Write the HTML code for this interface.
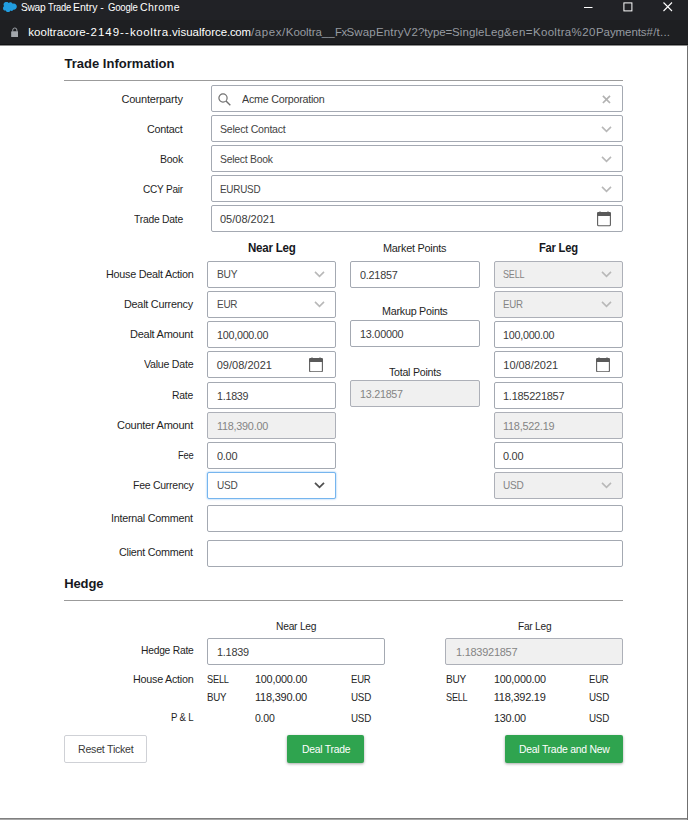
<!DOCTYPE html>
<html lang="en"><head><meta charset="utf-8"><title>Swap Trade Entry</title>
<style>
*{box-sizing:border-box}
html,body{margin:0;padding:0}
body{width:688px;height:820px;overflow:hidden;background:#fff;font-family:"Liberation Sans", Arial, sans-serif;position:relative}
span,label,h2{position:absolute;transform-origin:0 0;white-space:pre;margin:0;font-weight:400;display:block}
.titlebar{position:absolute;left:0;top:0;width:688px;height:20px;background:#212226}
.urlbar{position:absolute;left:0;top:20px;width:688px;height:25px;background:#1e1f22;border-bottom:1px solid #111214}
.cloud{position:absolute;left:3px;top:2px}
.wc{position:absolute}
.lock{position:absolute;left:10.700px;top:6.900px}
.page{position:absolute;left:0;top:45px;width:687px;height:773px;background:#fff}
.page:before{content:"";position:absolute;left:0;top:0;width:688px;height:1px;background:#8c8c8c}
.edge-r{position:absolute;left:687px;top:45px;width:1px;height:775px;background:#707070}
.edge-b{position:absolute;left:0;top:818px;width:688px;height:2px;background:linear-gradient(#808080 0 50%,#a8a8a8 50% 100%)}
.hr{position:absolute;left:64px;width:559px;height:1px;background:#9b9b9b}
.inp{position:absolute;border:1px solid #a4a9b2;border-radius:2px;background:#fff}
.inp.dis{background:#f0f0f0;border-color:#adb0b8}
.inp.foc{border-color:#76b5ee;box-shadow:0 0 2px rgba(74,159,240,.75)}
.chev{position:absolute;right:10px;top:10px}
.cal{position:absolute;right:11.500px;top:5px}
.leg .chev{top:9px}
.leg .cal{top:4.700px;right:12px}
.leg .chev{right:9.700px}
.xic{position:absolute;right:11.500px;top:8.500px}
.srch{position:absolute;left:6px;top:7px}
.btn{position:absolute;border:1px solid #cfd1d6;border-radius:2px;background:#fff;padding:0;margin:0;font-family:inherit}
.btn.g{border:0;background:#2fa44f;box-shadow:0 1px 3px rgba(0,0,0,.35)}
</style></head>
<body>
<div class="titlebar">
<svg class="cloud" viewBox="0 0 28 20" width="13.600" height="10" preserveAspectRatio="none"><path d="M11.6 2.2a5 5 0 0 1 3.7-1.6c1.9 0 3.600 1.100 4.500 2.700a6 6 0 0 1 2.500-.5c3.400 0 6.200 2.800 6.200 6.300s-2.800 6.300-6.200 6.300c-.4 0-.8 0-1.200-.1a4.500 4.500 0 0 1-5.900 1.900 5.200 5.200 0 0 1-9.600-.2 4.700 4.700 0 0 1-1 .1C2 17.100 0 15 0 12.400c0-1.700.9-3.200 2.300-4a5.400 5.400 0 0 1 9.300-6.200z" fill="#219de0"/></svg>
<div class="ttl"><span style="top:0.30px;left:20.70px;font-size:10.5px;line-height:14px;letter-spacing:-0.250px;color:#fff;transform:scaleX(0.9664);">Swap </span><span style="top:0.30px;left:47.70px;font-size:10.5px;line-height:14px;letter-spacing:-0.250px;color:#fff;transform:scaleX(0.8887);">Trade </span><span style="top:0.30px;left:73.00px;font-size:10.5px;line-height:14px;letter-spacing:-0.023px;color:#fff;">Entry </span><span style="top:0.30px;left:100.30px;font-size:10.5px;line-height:14px;letter-spacing:0.639px;color:#fff;">- </span><span style="top:0.30px;left:108.00px;font-size:10.5px;line-height:14px;letter-spacing:-0.250px;color:#fff;transform:scaleX(0.9135);">Google </span><span style="top:0.30px;left:140.00px;font-size:10.5px;line-height:14px;letter-spacing:0.440px;color:#fff;">Chrome</span></div>
<svg class="wc" style="left:584px;top:2px" width="10" height="10" viewBox="0 0 10 10"><path d="M0 5.500H8.500" stroke="#fff" stroke-width="1" fill="none"/></svg>
<svg class="wc" style="left:623px;top:2px" width="10" height="10" viewBox="0 0 10 10"><rect x="0.900" y="0.900" width="8" height="8" stroke="#fff" stroke-width="1" fill="none"/></svg>
<svg class="wc" style="left:663px;top:2px" width="10" height="10" viewBox="0 0 10 10"><path d="M0.500 0.500L9 9M9 0.500L0.500 9" stroke="#fff" stroke-width="1.100" fill="none"/></svg>
</div>
<div class="urlbar">
<svg class="lock" viewBox="0 0 16 22" width="7.600" height="10.400"><path d="M3.600 9.500V6.500a4.400 4.400 0 0 1 8.800 0V9.500" stroke="#a3a7ac" stroke-width="2" fill="none"/><rect x="0.300" y="9" width="15.400" height="12.600" rx="1.500" fill="#a3a7ac"/></svg>
<div class="url"><span style="top:4.30px;left:28.30px;font-size:11.5px;line-height:16px;letter-spacing:0.055px;color:#fff;">kooltracore</span><span style="top:4.30px;left:85.80px;font-size:11.5px;line-height:16px;letter-spacing:0.956px;color:#fff;">-2149</span><span style="top:4.30px;left:120.00px;font-size:11.5px;line-height:16px;letter-spacing:1.164px;color:#fff;">--</span><span style="top:4.30px;left:130.00px;font-size:11.5px;line-height:16px;letter-spacing:0.610px;color:#fff;">kooltra</span><span style="top:4.30px;left:168.80px;font-size:11.5px;line-height:16px;letter-spacing:0.027px;color:#fff;">.visualforce</span><span style="top:4.30px;left:227.30px;font-size:11.5px;line-height:16px;letter-spacing:-0.250px;color:#fff;transform:scaleX(0.9865);">.com</span><span style="top:4.30px;left:250.90px;font-size:11.5px;line-height:16px;letter-spacing:0.595px;color:#969ba1;">/apex/</span><span style="top:4.30px;left:285.80px;font-size:11.5px;line-height:16px;letter-spacing:-0.059px;color:#969ba1;">Kooltra__</span><span style="top:4.30px;left:334.50px;font-size:11.5px;line-height:16px;letter-spacing:-0.250px;color:#969ba1;transform:scaleX(0.9771);">Fx</span><span style="top:4.30px;left:346.50px;font-size:11.5px;line-height:16px;letter-spacing:0.165px;color:#969ba1;">SwapEntryV2</span><span style="top:4.30px;left:418.00px;font-size:11.5px;line-height:16px;letter-spacing:-0.143px;color:#969ba1;">?type=</span><span style="top:4.30px;left:452.00px;font-size:11.5px;line-height:16px;letter-spacing:0.094px;color:#969ba1;">SingleLeg</span><span style="top:4.30px;left:504.00px;font-size:11.5px;line-height:16px;letter-spacing:0.453px;color:#969ba1;">&amp;en=</span><span style="top:4.30px;left:533.00px;font-size:11.5px;line-height:16px;letter-spacing:0.295px;color:#969ba1;">Kooltra</span><span style="top:4.30px;left:571.50px;font-size:11.5px;line-height:16px;letter-spacing:0.490px;color:#969ba1;">%20</span><span style="top:4.30px;left:596.00px;font-size:11.5px;line-height:16px;letter-spacing:-0.080px;color:#969ba1;">Payments</span><span style="top:4.30px;left:646.50px;font-size:11.5px;line-height:16px;letter-spacing:0.237px;color:#969ba1;">#/t...</span></div>
</div>
<div class="page">
<h2 style="top:9.80px;left:64.50px;font-size:13px;line-height:18px;letter-spacing:0.012px;font-weight:700;color:#16181d;">Trade Information</h2>
<div class="hr" style="top:35px"></div>
<label style="top:46.50px;left:121.40px;font-size:11px;line-height:14px;letter-spacing:-0.191px;color:#1f1f1f;">Counterparty</label>
<div class="inp" style="left:211px;top:40px;width:412px;height:27px"><svg class="srch" width="13" height="13" viewBox="0 0 13 13"><circle cx="5" cy="5" r="4.100" stroke="#707070" stroke-width="1.200" fill="none"/><path d="M8 8L12.300 12.300" stroke="#707070" stroke-width="1.400"/></svg><span style="top:5.80px;left:29.80px;font-size:11px;line-height:14px;letter-spacing:-0.250px;color:#3a3a3a;transform:scaleX(0.9745);">Acme Corporation</span><svg class="xic" width="9" height="9" viewBox="0 0 9 9"><path d="M0.900 0.900L8 8M8 0.900L0.900 8" stroke="#b2b2b2" stroke-width="1.700" fill="none"/></svg></div>
<label style="top:76.50px;left:147.20px;font-size:11px;line-height:14px;letter-spacing:-0.250px;color:#1f1f1f;transform:scaleX(0.9814);">Contact</label>
<div class="inp" style="left:211px;top:70px;width:412px;height:27px"><span style="top:5.80px;left:8.00px;font-size:11px;line-height:14px;letter-spacing:-0.250px;color:#444;transform:scaleX(0.9626);">Select Contact</span><svg class="chev" width="11" height="7" viewBox="0 0 11 7"><path d="M1 0.900L5.500 5.300L10 0.900" stroke="#b8b8b8" stroke-width="1.600" fill="none"/></svg></div>
<label style="top:106.50px;left:159.70px;font-size:11px;line-height:14px;letter-spacing:-0.250px;color:#1f1f1f;transform:scaleX(0.9552);">Book</label>
<div class="inp" style="left:211px;top:100px;width:412px;height:27px"><span style="top:5.80px;left:8.00px;font-size:11px;line-height:14px;letter-spacing:-0.250px;color:#444;transform:scaleX(0.9436);">Select Book</span><svg class="chev" width="11" height="7" viewBox="0 0 11 7"><path d="M1 0.900L5.500 5.300L10 0.900" stroke="#b8b8b8" stroke-width="1.600" fill="none"/></svg></div>
<label style="top:136.50px;left:142.70px;font-size:11px;line-height:14px;letter-spacing:-0.250px;color:#1f1f1f;transform:scaleX(0.9162);">CCY Pair</label>
<div class="inp" style="left:211px;top:130px;width:412px;height:27px"><span style="top:5.80px;left:8.00px;font-size:11px;line-height:14px;letter-spacing:-0.250px;color:#444;transform:scaleX(0.8965);">EURUSD</span><svg class="chev" width="11" height="7" viewBox="0 0 11 7"><path d="M1 0.900L5.500 5.300L10 0.900" stroke="#b8b8b8" stroke-width="1.600" fill="none"/></svg></div>
<label style="top:166.50px;left:133.70px;font-size:11px;line-height:14px;letter-spacing:-0.250px;color:#1f1f1f;transform:scaleX(0.9400);">Trade Date</label>
<div class="inp" style="left:211px;top:160px;width:412px;height:27px"><span style="top:5.80px;left:8.00px;font-size:11px;line-height:14px;letter-spacing:-0.006px;color:#3a3a3a;">05/08/2021</span><svg class="cal" width="14" height="15.500" viewBox="0 0 14 16" preserveAspectRatio="none"><path d="M3 0.200v2M11 0.200v2" stroke="#777" stroke-width="1.100"/><rect x="0.600" y="1.600" width="12.800" height="13.600" rx="1" fill="#fff" stroke="#5e5e5e" stroke-width="1.100"/><path d="M0.100 2.600a1.500 1.500 0 0 1 1.500-1.500h10.800a1.500 1.500 0 0 1 1.500 1.500v2.600H0.100z" fill="#5a5a5a"/></svg></div>
<span style="top:195.50px;left:248.00px;font-size:12px;line-height:15px;letter-spacing:-0.250px;font-weight:700;color:#16181d;transform:scaleX(0.9623);">Near Leg</span>
<span style="top:195.50px;left:538.80px;font-size:12px;line-height:15px;letter-spacing:-0.250px;font-weight:700;color:#16181d;transform:scaleX(0.9328);">Far Leg</span>
<label style="top:196.00px;left:383.30px;font-size:11px;line-height:14px;letter-spacing:-0.250px;color:#1f1f1f;transform:scaleX(0.9891);">Market Points</label>
<label style="top:259.00px;left:382.00px;font-size:11px;line-height:14px;letter-spacing:-0.250px;color:#1f1f1f;transform:scaleX(0.9767);">Markup Points</label>
<label style="top:319.50px;left:389.00px;font-size:11px;line-height:14px;letter-spacing:-0.250px;color:#1f1f1f;transform:scaleX(0.9652);">Total Points</label>
<label style="top:221.50px;left:105.50px;font-size:11px;line-height:14px;letter-spacing:-0.250px;color:#1f1f1f;transform:scaleX(0.9825);">House Dealt Action</label>
<label style="top:251.50px;left:124.20px;font-size:11px;line-height:14px;letter-spacing:-0.250px;color:#1f1f1f;transform:scaleX(0.9848);">Dealt Currency</label>
<label style="top:281.50px;left:130.00px;font-size:11px;line-height:14px;letter-spacing:-0.250px;color:#1f1f1f;transform:scaleX(0.9993);">Dealt Amount</label>
<label style="top:312.00px;left:143.70px;font-size:11px;line-height:14px;letter-spacing:-0.250px;color:#1f1f1f;transform:scaleX(0.9646);">Value Date</label>
<label style="top:342.50px;left:172.00px;font-size:11px;line-height:14px;letter-spacing:-0.250px;color:#1f1f1f;transform:scaleX(0.9438);">Rate</label>
<label style="top:372.50px;left:117.00px;font-size:11px;line-height:14px;letter-spacing:-0.250px;color:#1f1f1f;">Counter Amount</label>
<label style="top:402.50px;left:177.50px;font-size:11px;line-height:14px;letter-spacing:-0.250px;color:#1f1f1f;transform:scaleX(0.8508);">Fee</label>
<label style="top:432.50px;left:132.50px;font-size:11px;line-height:14px;letter-spacing:-0.250px;color:#1f1f1f;transform:scaleX(0.9507);">Fee Currency</label>
<div class="inp leg" style="left:207px;top:216px;width:129px;height:27px"><span style="top:4.80px;left:8.70px;font-size:11px;line-height:14px;letter-spacing:-0.250px;color:#4a4a4a;transform:scaleX(0.9280);">BUY</span><svg class="chev" width="11" height="7" viewBox="0 0 11 7"><path d="M1 0.900L5.500 5.300L10 0.900" stroke="#b8b8b8" stroke-width="1.600" fill="none"/></svg></div>
<div class="inp leg" style="left:207px;top:246px;width:129px;height:27px"><span style="top:4.80px;left:8.70px;font-size:11px;line-height:14px;letter-spacing:-0.250px;color:#4a4a4a;transform:scaleX(0.9028);">EUR</span><svg class="chev" width="11" height="7" viewBox="0 0 11 7"><path d="M1 0.900L5.500 5.300L10 0.900" stroke="#b8b8b8" stroke-width="1.600" fill="none"/></svg></div>
<div class="inp leg" style="left:207px;top:276px;width:129px;height:27px"><span style="top:5.80px;left:8.70px;font-size:11px;line-height:14px;letter-spacing:-0.250px;color:#3a3a3a;transform:scaleX(0.9760);">100,000.00</span></div>
<div class="inp leg" style="left:207px;top:306px;width:129px;height:27px"><span style="top:5.80px;left:8.70px;font-size:11px;line-height:14px;letter-spacing:0.024px;color:#3a3a3a;">09/08/2021</span><svg class="cal" width="14" height="15.500" viewBox="0 0 14 16" preserveAspectRatio="none"><path d="M3 0.200v2M11 0.200v2" stroke="#777" stroke-width="1.100"/><rect x="0.600" y="1.600" width="12.800" height="13.600" rx="1" fill="#fff" stroke="#5e5e5e" stroke-width="1.100"/><path d="M0.100 2.600a1.500 1.500 0 0 1 1.500-1.500h10.800a1.500 1.500 0 0 1 1.500 1.500v2.600H0.100z" fill="#5a5a5a"/></svg></div>
<div class="inp leg" style="left:207px;top:337px;width:129px;height:27px"><span style="top:5.80px;left:8.70px;font-size:11px;line-height:14px;letter-spacing:-0.250px;color:#3a3a3a;transform:scaleX(0.9734);">1.1839</span></div>
<div class="inp leg dis" style="left:207px;top:367px;width:129px;height:27px"><span style="top:5.80px;left:8.70px;font-size:11px;line-height:14px;letter-spacing:-0.250px;color:#848484;transform:scaleX(0.9855);">118,390.00</span></div>
<div class="inp leg" style="left:207px;top:397px;width:129px;height:27px"><span style="top:5.80px;left:8.70px;font-size:11px;line-height:14px;letter-spacing:-0.250px;color:#3a3a3a;transform:scaleX(0.9940);">0.00</span></div>
<div class="inp leg foc" style="left:207px;top:427px;width:129px;height:27px"><span style="top:4.80px;left:8.70px;font-size:11px;line-height:14px;letter-spacing:-0.250px;color:#4a4a4a;transform:scaleX(0.9117);">USD</span><svg class="chev" width="11" height="7" viewBox="0 0 11 7"><path d="M1 0.900L5.500 5.300L10 0.900" stroke="#505050" stroke-width="1.800" fill="none"/></svg></div>
<div class="inp leg dis" style="left:494px;top:216px;width:129px;height:27px"><span style="top:4.80px;left:8.30px;font-size:11px;line-height:14px;letter-spacing:-0.250px;color:#848484;transform:scaleX(0.8217);">SELL</span><svg class="chev" width="11" height="7" viewBox="0 0 11 7"><path d="M1 0.900L5.500 5.300L10 0.900" stroke="#b8b8b8" stroke-width="1.600" fill="none"/></svg></div>
<div class="inp leg dis" style="left:494px;top:246px;width:129px;height:27px"><span style="top:4.80px;left:8.30px;font-size:11px;line-height:14px;letter-spacing:-0.250px;color:#848484;transform:scaleX(0.8806);">EUR</span><svg class="chev" width="11" height="7" viewBox="0 0 11 7"><path d="M1 0.900L5.500 5.300L10 0.900" stroke="#b8b8b8" stroke-width="1.600" fill="none"/></svg></div>
<div class="inp leg" style="left:494px;top:276px;width:129px;height:27px"><span style="top:5.80px;left:8.30px;font-size:11px;line-height:14px;letter-spacing:-0.250px;color:#3a3a3a;transform:scaleX(0.9760);">100,000.00</span></div>
<div class="inp leg" style="left:494px;top:306px;width:129px;height:27px"><span style="top:5.80px;left:8.30px;font-size:11px;line-height:14px;letter-spacing:-0.026px;color:#3a3a3a;">10/08/2021</span><svg class="cal" width="14" height="15.500" viewBox="0 0 14 16" preserveAspectRatio="none"><path d="M3 0.200v2M11 0.200v2" stroke="#777" stroke-width="1.100"/><rect x="0.600" y="1.600" width="12.800" height="13.600" rx="1" fill="#fff" stroke="#5e5e5e" stroke-width="1.100"/><path d="M0.100 2.600a1.500 1.500 0 0 1 1.500-1.500h10.800a1.500 1.500 0 0 1 1.500 1.500v2.600H0.100z" fill="#5a5a5a"/></svg></div>
<div class="inp leg" style="left:494px;top:337px;width:129px;height:27px"><span style="top:5.80px;left:8.30px;font-size:11px;line-height:14px;letter-spacing:-0.250px;color:#3a3a3a;transform:scaleX(0.9970);">1.185221857</span></div>
<div class="inp leg dis" style="left:494px;top:367px;width:129px;height:27px"><span style="top:5.80px;left:8.30px;font-size:11px;line-height:14px;letter-spacing:-0.250px;color:#848484;transform:scaleX(0.9913);">118,522.19</span></div>
<div class="inp leg" style="left:494px;top:397px;width:129px;height:27px"><span style="top:5.80px;left:8.30px;font-size:11px;line-height:14px;letter-spacing:-0.250px;color:#3a3a3a;transform:scaleX(0.9940);">0.00</span></div>
<div class="inp leg dis" style="left:494px;top:427px;width:129px;height:27px"><span style="top:4.80px;left:8.30px;font-size:11px;line-height:14px;letter-spacing:-0.250px;color:#848484;transform:scaleX(0.9117);">USD</span><svg class="chev" width="11" height="7" viewBox="0 0 11 7"><path d="M1 0.900L5.500 5.300L10 0.900" stroke="#b8b8b8" stroke-width="1.600" fill="none"/></svg></div>
<div class="inp leg" style="left:350px;top:216px;width:130px;height:27px"><span style="top:5.80px;left:8.50px;font-size:11px;line-height:14px;letter-spacing:-0.250px;color:#3a3a3a;transform:scaleX(0.9864);">0.21857</span></div>
<div class="inp leg" style="left:350px;top:275px;width:130px;height:27px"><span style="top:5.80px;left:9.30px;font-size:11px;line-height:14px;letter-spacing:-0.250px;color:#3a3a3a;transform:scaleX(0.9865);">13.00000</span></div>
<div class="inp leg dis" style="left:350px;top:335px;width:130px;height:27px"><span style="top:5.80px;left:9.30px;font-size:11px;line-height:14px;letter-spacing:-0.250px;color:#848484;transform:scaleX(0.9752);">13.21857</span></div>
<label style="top:465.80px;left:111.20px;font-size:11px;line-height:14px;letter-spacing:-0.250px;color:#1f1f1f;transform:scaleX(0.9804);">Internal Comment</label>
<label style="top:500.30px;left:119.20px;font-size:11px;line-height:14px;letter-spacing:-0.250px;color:#1f1f1f;transform:scaleX(0.9793);">Client Comment</label>
<div class="inp" style="left:207px;top:460px;width:416px;height:27px"></div>
<div class="inp" style="left:207px;top:495px;width:416px;height:27px"></div>
<h2 style="top:529.50px;left:64.30px;font-size:13px;line-height:18px;letter-spacing:-0.147px;font-weight:700;color:#16181d;">Hedge</h2>
<div class="hr" style="top:555px"></div>
<span style="top:573.50px;left:275.50px;font-size:11px;line-height:14px;letter-spacing:-0.250px;color:#1f1f1f;transform:scaleX(0.9315);">Near Leg</span>
<span style="top:573.50px;left:517.50px;font-size:11px;line-height:14px;letter-spacing:-0.250px;color:#1f1f1f;transform:scaleX(0.9206);">Far Leg</span>
<label style="top:598.30px;left:140.50px;font-size:11px;line-height:14px;letter-spacing:-0.250px;color:#1f1f1f;transform:scaleX(0.9339);">Hedge Rate</label>
<div class="inp leg" style="left:207px;top:593px;width:178px;height:27px"><span style="top:5.80px;left:8.50px;font-size:11px;line-height:14px;letter-spacing:-0.250px;color:#3a3a3a;transform:scaleX(0.9889);">1.1839</span></div>
<div class="inp leg dis" style="left:445px;top:593px;width:178px;height:27px"><span style="top:5.80px;left:9.80px;font-size:11px;line-height:14px;letter-spacing:-0.250px;color:#848484;transform:scaleX(0.9970);">1.183921857</span></div>
<label style="top:626.50px;left:132.50px;font-size:11px;line-height:14px;letter-spacing:-0.250px;color:#1f1f1f;transform:scaleX(0.9785);">House Action</label>
<label style="top:664.50px;left:170.70px;font-size:11px;line-height:14px;letter-spacing:-0.250px;color:#1f1f1f;transform:scaleX(0.8756);">P &amp; L</label>
<span style="top:626.50px;left:207.00px;font-size:11px;line-height:14px;letter-spacing:-0.250px;color:#262626;transform:scaleX(0.8410);">SELL</span>
<span style="top:626.50px;left:255.00px;font-size:11px;line-height:14px;letter-spacing:-0.250px;color:#262626;transform:scaleX(0.9893);">100,000.00</span>
<span style="top:626.50px;left:350.50px;font-size:11px;line-height:14px;letter-spacing:-0.250px;color:#262626;transform:scaleX(0.8673);">EUR</span>
<span style="top:645.30px;left:207.00px;font-size:11px;line-height:14px;letter-spacing:-0.250px;color:#262626;transform:scaleX(0.8823);">BUY</span>
<span style="top:645.30px;left:255.00px;font-size:11px;line-height:14px;letter-spacing:-0.225px;color:#262626;">118,390.00</span>
<span style="top:645.30px;left:350.50px;font-size:11px;line-height:14px;letter-spacing:-0.250px;color:#262626;transform:scaleX(0.8895);">USD</span>
<span style="top:665.50px;left:255.00px;font-size:11px;line-height:14px;letter-spacing:-0.250px;color:#262626;transform:scaleX(0.9549);">0.00</span>
<span style="top:665.50px;left:350.50px;font-size:11px;line-height:14px;letter-spacing:-0.250px;color:#262626;transform:scaleX(0.8895);">USD</span>
<span style="top:626.50px;left:445.80px;font-size:11px;line-height:14px;letter-spacing:-0.250px;color:#262626;transform:scaleX(0.9143);">BUY</span>
<span style="top:626.50px;left:493.80px;font-size:11px;line-height:14px;letter-spacing:-0.250px;color:#262626;transform:scaleX(0.9855);">100,000.00</span>
<span style="top:626.50px;left:589.30px;font-size:11px;line-height:14px;letter-spacing:-0.250px;color:#262626;transform:scaleX(0.8673);">EUR</span>
<span style="top:645.30px;left:445.80px;font-size:11px;line-height:14px;letter-spacing:-0.250px;color:#262626;transform:scaleX(0.8294);">SELL</span>
<span style="top:645.30px;left:493.80px;font-size:11px;line-height:14px;letter-spacing:-0.245px;color:#262626;">118,392.19</span>
<span style="top:645.30px;left:589.30px;font-size:11px;line-height:14px;letter-spacing:-0.250px;color:#262626;transform:scaleX(0.8895);">USD</span>
<span style="top:665.50px;left:493.80px;font-size:11px;line-height:14px;letter-spacing:-0.250px;color:#262626;transform:scaleX(0.9889);">130.00</span>
<span style="top:665.50px;left:589.30px;font-size:11px;line-height:14px;letter-spacing:-0.250px;color:#262626;transform:scaleX(0.8895);">USD</span>
<button class="btn" style="left:64px;top:690px;width:83px;height:28px"><span style="top:5.50px;left:12.50px;font-size:11px;line-height:14px;letter-spacing:-0.250px;color:#3a3a3a;transform:scaleX(0.9647);">Reset Ticket</span></button>
<button class="btn g" style="left:287px;top:690px;width:77px;height:28px"><span style="top:6.50px;left:14.80px;font-size:11px;line-height:14px;letter-spacing:-0.250px;color:#fff;transform:scaleX(0.9413);">Deal Trade</span></button>
<button class="btn g" style="left:505px;top:690px;width:118px;height:28px"><span style="top:6.50px;left:13.80px;font-size:11px;line-height:14px;letter-spacing:-0.250px;color:#fff;transform:scaleX(0.9449);">Deal Trade and New</span></button>
</div>
<div class="edge-b"></div><div class="edge-r"></div>
</body></html>
